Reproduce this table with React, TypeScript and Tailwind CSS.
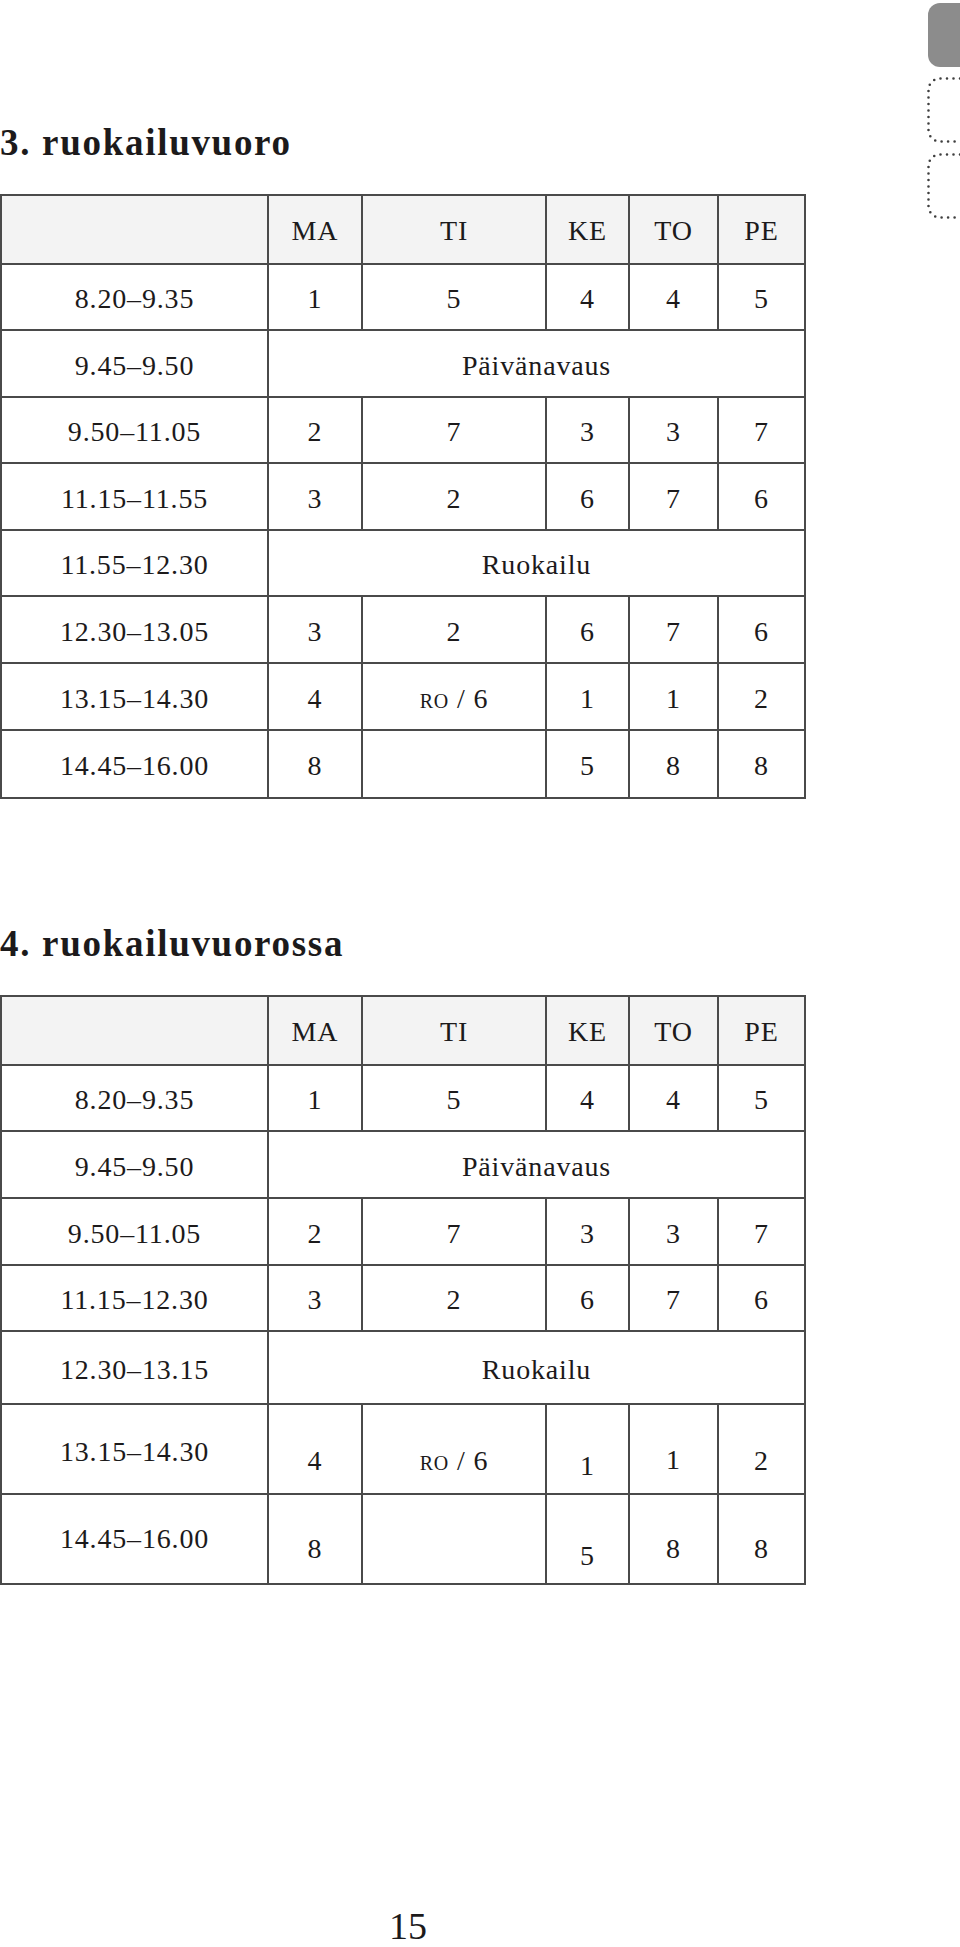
const cols = "grid grid-cols-[265px_94px_184px_83px_89px_87px]";

type Row = {
  time: string;
  cells?: (string | null)[];
  span?: string;
  h: number;
  timeCls?: string;
  cellCls?: string[];
};

const days = ["MA", "TI", "KE", "TO", "PE"];

function Cell({ value, className }: { value: string | null; className?: string }) {
  return (
    <div className={`flex h-full items-center justify-center border-l-2 border-[#4a4a4a] ${className || "pt-1"}`}>
      {value === "ro/6" ? (
        <span>
          <span className="[font-variant-caps:small-caps]">ro</span> / 6
        </span>
      ) : (
        value
      )}
    </div>
  );
}

function Table({ rows, headerH }: { rows: Row[]; headerH: number }) {
  return (
    <div className="w-[806px] border-2 border-[#4a4a4a]">
      <div
        className={`${cols} border-b-2 border-[#4a4a4a] bg-[#f3f3f3]`}
        style={{ height: headerH }}
      >
        <div />
        {days.map((d) => (
          <Cell key={d} value={d} className="pt-[3px]" />
        ))}
      </div>
      {rows.map((row, i) => (
        <div
          key={row.time}
          className={`${cols} ${i < rows.length - 1 ? "border-b-2 border-[#4a4a4a]" : ""}`}
          style={{ height: row.h }}
        >
          <div className={`flex h-full items-center justify-center ${row.timeCls || "pt-1"}`}>
            {row.time}
          </div>
          {row.span ? (
            <div className="col-span-5 flex h-full items-center justify-center border-l-2 border-[#4a4a4a] pt-1">
              {row.span}
            </div>
          ) : (
            row.cells!.map((c, j) => (
              <Cell key={j} value={c} className={row.cellCls ? row.cellCls[j] : undefined} />
            ))
          )}
        </div>
      ))}
    </div>
  );
}

const first: Row[] = [
  { time: "8.20–9.35", cells: ["1", "5", "4", "4", "5"], h: 66 },
  { time: "9.45–9.50", span: "Päivänavaus", h: 67 },
  { time: "9.50–11.05", cells: ["2", "7", "3", "3", "7"], h: 66 },
  { time: "11.15–11.55", cells: ["3", "2", "6", "7", "6"], h: 67 },
  { time: "11.55–12.30", span: "Ruokailu", h: 66 },
  { time: "12.30–13.05", cells: ["3", "2", "6", "7", "6"], h: 67 },
  { time: "13.15–14.30", cells: ["4", "ro/6", "1", "1", "2"], h: 67 },
  { time: "14.45–16.00", cells: ["8", null, "5", "8", "8"], h: 66 },
];

const second: Row[] = [
  { time: "8.20–9.35", cells: ["1", "5", "4", "4", "5"], h: 66 },
  { time: "9.45–9.50", span: "Päivänavaus", h: 67 },
  { time: "9.50–11.05", cells: ["2", "7", "3", "3", "7"], h: 67 },
  { time: "11.15–12.30", cells: ["3", "2", "6", "7", "6"], h: 66 },
  { time: "12.30–13.15", span: "Ruokailu", h: 73 },
  {
    time: "13.15–14.30",
    cells: ["4", "ro/6", "1", "1", "2"],
    h: 90,
    timeCls: "pt-[6px]",
    cellCls: ["pt-[24px]", "pt-[24px]", "pt-[34px]", "pt-[22px]", "pt-[24px]"],
  },
  {
    time: "14.45–16.00",
    cells: ["8", null, "5", "8", "8"],
    h: 88,
    timeCls: "pt-0",
    cellCls: ["pt-[20px]", "pt-[20px]", "pt-[34px]", "pt-[20px]", "pt-[20px]"],
  },
];

function Tab({ dotted }: { dotted?: boolean }) {
  if (!dotted) {
    return <div className="h-[64px] w-[32px] rounded-l-[12px] bg-[#8c8c8c]" />;
  }
  return (
    <svg width="33" height="66" viewBox="0 0 33 66" className="block">
      <path
        d="M33 1.5 H13 A11.5 11.5 0 0 0 1.5 13 V53 A11.5 11.5 0 0 0 13 64.5 H33"
        fill="none"
        stroke="#3f3f3f"
        strokeWidth="2.6"
        strokeDasharray="0 6.5"
        strokeLinecap="round"
      />
    </svg>
  );
}

export default function App() {
  return (
    <div className="flex h-[1947px] overflow-hidden bg-white font-['Liberation_Serif',serif] text-[28px] leading-none tracking-[0.03em] text-[#1c1a1b]">
      <main className="w-[806px] shrink-0">
        <h1 className="mt-[124px] text-[37px] font-bold leading-none tracking-[1.7px]">
          3. ruokailuvuoro
        </h1>
        <div className="mt-[33px]">
          <Table rows={first} headerH={69} />
        </div>

        <h1 className="mt-[126px] text-[37px] font-bold leading-none tracking-[1.7px]">
          4. ruokailuvuorossa
        </h1>
        <div className="mt-[33px]">
          <Table rows={second} headerH={69} />
        </div>

        <p className="mt-[322px] pl-[389px] text-[38px] tracking-normal">15</p>
      </main>

      <aside className="ml-auto flex w-[33px] flex-col items-end gap-[10px] pt-[3px]">
        <Tab />
        <Tab dotted />
        <Tab dotted />
      </aside>
    </div>
  );
}
